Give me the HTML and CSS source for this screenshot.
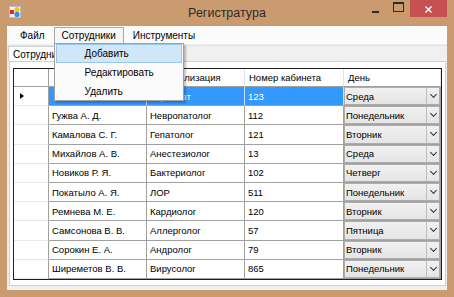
FILE: index.html
```html
<!DOCTYPE html>
<html lang="ru">
<head>
    <meta charset="UTF-8">
    <title>Регистратура</title>
    <link rel="stylesheet" href="styles.css">
</head>
<body>
<div class="window">
    <div class="titlebar">
        <svg class="app-icon" width="12" height="12" viewBox="0 0 12 12">
            <rect x="0.5" y="0.5" width="11" height="11" fill="#eef0f4" stroke="#b9bdc6"/>
            <rect x="1" y="4" width="4" height="4" fill="#e0262a"/>
            <circle cx="8" cy="3.6" r="2.6" fill="#f2c21b"/>
            <circle cx="8" cy="8.4" r="2.6" fill="#3d8ee0"/>
        </svg>
        <div class="title">Регистратура</div>
        <div class="caption">
            <span class="cap cap-min"></span>
            <span class="cap cap-max"></span>
            <span class="cap cap-close">
                <svg width="7" height="7" viewBox="0 0 7 7"><path d="M0.5 0.5 L6.5 6.5 M6.5 0.5 L0.5 6.5" stroke="#fff" stroke-width="1.4"/></svg>
            </span>
        </div>
    </div>

    <div class="client">
        <div class="menubar">
            <div class="menu-item">Файл</div>
            <div class="menu-item open">Сотрудники
                <div class="dropdown">
                    <div class="drop-item hot">Добавить</div>
                    <div class="drop-item">Редактировать</div>
                    <div class="drop-item">Удалить</div>
                </div>
            </div>
            <div class="menu-item">Инструменты</div>
        </div>

        <div class="tabs">
            <div class="tab-strip">
                <div class="tab">Сотрудники</div>
            </div>
            <div class="tab-page">
                <div class="grid">
                    <div class="hcell corner"></div>
                    <div class="hcell"></div>
                    <div class="hcell">Специализация</div>
                    <div class="hcell">Номер кабинета</div>
                    <div class="hcell">День</div>

                    <div class="rhead current"><span class="arrow"></span></div>
                    <div class="cell sel"></div>
                    <div class="cell sel">Терапевт</div>
                    <div class="cell sel">123</div>
                    <div class="cell day"><div class="combo"><span>Среда</span><i class="drop-btn"></i></div></div>

                    <div class="rhead"></div>
                    <div class="cell">Гужва А. Д.</div>
                    <div class="cell">Невропатолог</div>
                    <div class="cell">112</div>
                    <div class="cell day"><div class="combo"><span>Понедельник</span><i class="drop-btn"></i></div></div>

                    <div class="rhead"></div>
                    <div class="cell">Камалова С. Г.</div>
                    <div class="cell">Гепатолог</div>
                    <div class="cell">121</div>
                    <div class="cell day"><div class="combo"><span>Вторник</span><i class="drop-btn"></i></div></div>

                    <div class="rhead"></div>
                    <div class="cell">Михайлов А. В.</div>
                    <div class="cell">Анестезиолог</div>
                    <div class="cell">13</div>
                    <div class="cell day"><div class="combo"><span>Среда</span><i class="drop-btn"></i></div></div>

                    <div class="rhead"></div>
                    <div class="cell">Новиков Р. Я.</div>
                    <div class="cell">Бактериолог</div>
                    <div class="cell">102</div>
                    <div class="cell day"><div class="combo"><span>Четверг</span><i class="drop-btn"></i></div></div>

                    <div class="rhead"></div>
                    <div class="cell">Покатыло А. Я.</div>
                    <div class="cell">ЛОР</div>
                    <div class="cell">511</div>
                    <div class="cell day"><div class="combo"><span>Понедельник</span><i class="drop-btn"></i></div></div>

                    <div class="rhead"></div>
                    <div class="cell">Ремнева М. Е.</div>
                    <div class="cell">Кардиолог</div>
                    <div class="cell">120</div>
                    <div class="cell day"><div class="combo"><span>Вторник</span><i class="drop-btn"></i></div></div>

                    <div class="rhead"></div>
                    <div class="cell">Самсонова В. В.</div>
                    <div class="cell">Аллерголог</div>
                    <div class="cell">57</div>
                    <div class="cell day"><div class="combo"><span>Пятница</span><i class="drop-btn"></i></div></div>

                    <div class="rhead"></div>
                    <div class="cell">Сорокин Е. А.</div>
                    <div class="cell">Андролог</div>
                    <div class="cell">79</div>
                    <div class="cell day"><div class="combo"><span>Вторник</span><i class="drop-btn"></i></div></div>

                    <div class="rhead"></div>
                    <div class="cell">Ширеметов В. В.</div>
                    <div class="cell">Вирусолог</div>
                    <div class="cell">865</div>
                    <div class="cell day"><div class="combo"><span>Понедельник</span><i class="drop-btn"></i></div></div>
                </div>
            </div>
        </div>
    </div>
</div>
</body>
</html>
```

FILE: styles.css
```css
* {
    box-sizing: border-box;
}
html, body {
    margin: 0;
}
body {
    width: 454px;
    height: 297px;
    overflow: hidden;
    background: #c99b6f;
    font-family: "Liberation Sans", Arial, sans-serif;
    color: #000;
}
.window {
    height: 297px;
    display: flex;
    flex-direction: column;
    padding: 0 7px 8px 7px;
}

/* title bar */
.titlebar {
    height: 26px;
    flex: none;
    display: grid;
    grid-template-columns: 1fr auto 1fr;
    align-items: start;
}
.app-icon {
    margin: 6px 0 0 2px;
}
.title {
    font-size: 12.5px;
    line-height: 27px;
    color: #2b2b2b;
}
.caption {
    justify-self: end;
    display: flex;
}
.cap {
    width: 23px;
    height: 17px;
    display: flex;
    align-items: center;
    justify-content: center;
}
.cap-min::before {
    content: "";
    width: 7px;
    height: 2px;
    margin-top: 6px;
    background: #2b2b2b;
}
.cap-max::before {
    content: "";
    width: 9px;
    height: 7px;
    margin-top: -3px;
    border: 1px solid #2b2b2b;
    border-top-width: 2px;
}
.cap-close {
    width: 37px;
    background: #c75050;
}
.cap-close svg {
    margin-top: 1px;
}

/* client area */
.client {
    flex: 1;
    display: flex;
    flex-direction: column;
    background: #f0f0f0;
}
.menubar {
    height: 18px;
    flex: none;
    display: flex;
    padding: 1px 0 0 5px;
    background: #fbfbfb;
    font-size: 10px;
}
.menu-item {
    position: relative;
    height: 17px;
    padding: 0 7px;
    margin-right: 1px;
    border: 1px solid transparent;
    line-height: 16px;
}
.menu-item.open {
    border-color: #a9a9a9;
    border-bottom-color: transparent;
    background: #f7f7f7;
}
.dropdown {
    position: absolute;
    left: -1px;
    top: 15px;
    width: 130px;
    height: 58px;
    padding: 0 1px;
    background: #fbfbfb;
    border: 1px solid #a0a0a0;
    box-shadow: 2px 2px 2px rgba(0, 0, 0, 0.25);
    z-index: 5;
}
.drop-item {
    height: 19px;
    padding-left: 28px;
    line-height: 18px;
    border: 1px solid transparent;
}
.drop-item.hot {
    background: #d0e7fa;
    border-color: #98c7ee;
}

/* tabs */
.tabs {
    flex: 1;
    display: flex;
    flex-direction: column;
    padding-top: 1px;
}
.tab-strip {
    height: 16px;
    flex: none;
    display: flex;
    padding-left: 1px;
    border-top: 1px solid #e3e3e3;
}
.tab {
    background: #fff;
    border: 1px solid #cfcfcf;
    border-bottom: none;
    padding: 0 5px 0 4px;
    font-size: 10px;
    line-height: 15px;
}
.tab-page {
    flex: 1;
    margin: 0 1px 4px 2px;
    padding: 6px 3px 5px 3px;
    background: #fff;
    border: 1px solid #cfcfcf;
}

/* data grid */
.grid {
    display: grid;
    grid-template-columns: 35px 98px 98px 99px 97px;
    grid-template-rows: 18px repeat(10, 19.2px);
    border: 1px solid #1e1e1e;
    background: #fff;
    font-size: 9.5px;
}
.hcell {
    display: flex;
    align-items: center;
    padding-left: 4px;
    border-right: 1px solid #e4e4e4;
    border-bottom: 1px solid #a0a0a0;
    white-space: nowrap;
}
.hcell.corner {
    border-right-color: #a0a0a0;
}
.rhead {
    display: flex;
    align-items: center;
    padding-left: 6px;
    border-right: 1px solid #a0a0a0;
    border-bottom: 1px solid #e6eaf0;
}
.arrow {
    width: 0;
    height: 0;
    border-left: 4px solid #000;
    border-top: 3.5px solid transparent;
    border-bottom: 3.5px solid transparent;
}
.cell {
    display: flex;
    align-items: center;
    padding-left: 3px;
    border-right: 1px solid #a0a0a0;
    border-bottom: 1px solid #a0a0a0;
    white-space: nowrap;
    overflow: hidden;
}
.cell.sel {
    background: #3399ff;
    color: #fff;
    border-right-color: #c8dff5;
}
.cell.day {
    padding: 0;
}
.combo {
    flex: 1;
    height: 100%;
    display: flex;
    align-items: center;
    padding-left: 1px;
    border: 1px solid #adadad;
    background: linear-gradient(#f1f1f1, #e5e5e5);
}
.combo span {
    flex: 1;
}
.drop-btn {
    width: 13px;
    height: 100%;
    border-left: 1px solid #bdbdbd;
    display: flex;
    align-items: center;
    justify-content: center;
}
.drop-btn::after {
    content: "";
    width: 4px;
    height: 4px;
    margin-top: -3px;
    border-right: 1.5px solid #333;
    border-bottom: 1.5px solid #333;
    transform: rotate(45deg);
}
```
